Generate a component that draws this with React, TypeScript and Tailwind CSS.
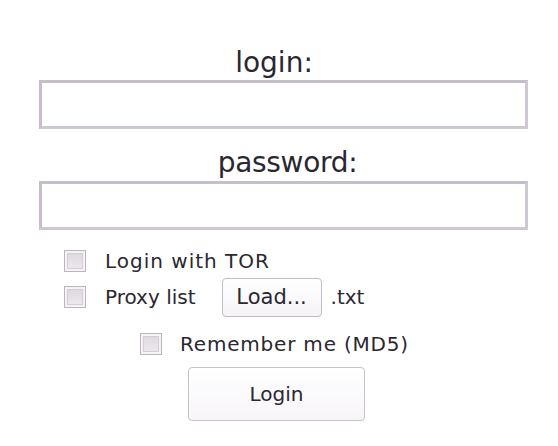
import React from 'react';

const Check: React.FC = () => (
  <span className="w-[22px] h-[22px] shrink-0 border border-[#bcb5bf] bg-[#f4f2f5] p-[2px]">
    <span className="block w-full h-full bg-gradient-to-b from-[#dedadf] to-[#ebe8ec] border border-[#d3ced5]" />
  </span>
);

const App: React.FC = () => {
  return (
    <div className="w-[558px] h-[446px] bg-white text-[#2b2730] font-['DejaVu_Sans',sans-serif]">
      <div className="pl-[39px] pr-[30px] pt-[48px] flex flex-col">
        <div className="text-center text-[28px] leading-[30px] tracking-[0px] pr-[19px]">login:</div>
        <div className="mt-[2px] h-[49px] border-[3px] border-[#cfc7d2] border-t-[#c6bec9] border-l-[#c6bec9] bg-white" />
        <div className="mt-[19px] text-center text-[28px] leading-[30px] tracking-[-0.3px] pl-[8px]">password:</div>
        <div className="mt-[3px] h-[49px] border-[3px] border-[#cfc7d2] border-t-[#c6bec9] border-l-[#c6bec9] bg-white" />
      </div>

      <div className="pl-[64px] pt-[20px] text-[20px] leading-[22px] flex flex-col">
        <label className="flex items-center h-[22px] gap-[19px]">
          <Check />
          <span className="tracking-[1px]">Login with TOR</span>
        </label>
        <div className="mt-[5px] flex items-center h-[40px]">
          <Check />
          <span className="ml-[19px]">Proxy list</span>
          <button className="ml-[26px] w-[100px] h-[39px] rounded-[4px] border border-[#c4bdc7] bg-gradient-to-b from-white to-[#f6f3f7] text-[21px] leading-[22px] text-[#2b2730]">
            Load...
          </button>
          <span className="ml-[9px]">.txt</span>
        </div>
        <label className="mt-[16px] ml-[76px] flex items-center h-[22px] gap-[18px]">
          <Check />
          <span className="tracking-[0.8px]">Remember me (MD5)</span>
        </label>
        <button className="mt-[12px] ml-[124px] w-[177px] h-[54px] rounded-[4px] border border-[#c8c1cb] bg-gradient-to-b from-white to-[#f8f5f9] text-[20px] leading-[22px] text-[#2b2730]">
          Login
        </button>
      </div>
    </div>
  );
};

export default App;
